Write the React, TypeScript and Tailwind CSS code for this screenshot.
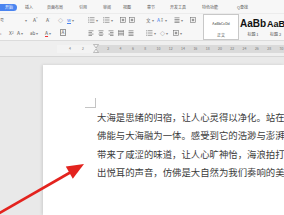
import React from "react";

const gray = "text-[#666]";

function Tab({ w, label, active }: { w: number; label: string; active?: boolean }) {
  return (
    <div style={{ width: w }} className="flex items-center shrink-0">
      {active ? (
        <div className="h-[7px] w-[17px] rounded-r-full bg-[#4a84f0] text-white text-[4px] leading-[7px] pl-[5px]">{label}</div>
      ) : (
        <span className="text-[4px] leading-[5px] text-[#555]">{label}</span>
      )}
    </div>
  );
}

function Cell({ w, children }: { w: number; children?: React.ReactNode }) {
  return (
    <div style={{ width: w }} className={`flex items-center shrink-0 h-full text-[5px] leading-[6px] ${gray}`}>
      {children}
    </div>
  );
}

function Lines({ kind }: { kind: "l" | "c" | "r" | "j" | "d" | "b" }) {
  const rows = [0, 1.6, 3.2, 4.8];
  const w = (i: number) => {
    if (kind === "l" || kind === "c" || kind === "r") return [5, 3.5, 5, 3.5][i];
    return 5;
  };
  const x = (i: number) => {
    if (kind === "c") return (5 - w(i)) / 2;
    if (kind === "r") return 5 - w(i);
    return 0;
  };
  return (
    <svg width="6" height="6" viewBox="0 0 6 6">
      {kind === "b" && <rect x="0" y="0" width="6" height="6" fill="#8a8a8a" />}
      {rows.map((r, i) => (
        <rect key={i} x={0.5 + x(i)} y={0.5 + r} width={w(i)} height="0.7" fill={kind === "b" ? "#fff" : "#777"} />
      ))}
    </svg>
  );
}

function ListIcon() {
  return (
    <svg width="7" height="6" viewBox="0 0 7 6">
      {[0.8, 3, 5.2].map((y) => (
        <g key={y}>
          <rect x="0.3" y={y - 0.5} width="1" height="1" fill="#777" />
          <rect x="2" y={y - 0.35} width="4.5" height="0.7" fill="#777" />
        </g>
      ))}
    </svg>
  );
}

function BoxIcon() {
  return (
    <svg width="6" height="6" viewBox="0 0 6 6">
      <rect x="0.5" y="0.5" width="5" height="5" fill="none" stroke="#777" strokeWidth="0.6" />
      <rect x="1.8" y="1.8" width="2.4" height="2.4" fill="#999" />
    </svg>
  );
}

const Dot = () => <span className="text-[4px] ml-[1px] text-[#888]">▾</span>;

export default function App() {
  const rulerLeft = [
    { x: 70, t: "4" },
    { x: 83, t: "2" },
  ];
  const rulerRight: { x: number; t: string }[] = [];
  for (let i = 1; i <= 15; i++) {
    rulerRight.push({ x: 96 + i * 12.3, t: String(i * 2) });
  }
  return (
    <div className="relative w-[284px] h-[215px] overflow-hidden bg-[#e9e9e9] flex flex-col" style={{ fontFamily: '"Noto Sans CJK SC", "Noto Sans", sans-serif' }}>
      {/* Toolbar */}
      <div className="h-[41px] bg-[#f7f7f7] border-b border-[#dcdcdc] shrink-0 flex flex-col">
        <div className="h-[15px] flex items-center pt-[2px] border-b border-[#ececec]">
          <Tab w={25} label="开始" active />
          <Tab w={22} label="插入" />
          <Tab w={32} label="页面布局" />
          <Tab w={24} label="引用" />
          <Tab w={20} label="审阅" />
          <Tab w={24} label="视图" />
          <Tab w={23} label="章节" />
          <Tab w={32} label="开发工具" />
          <Tab w={35} label="特色功能" />
          <Tab w={30} label="Q查找" />
        </div>
        <div className="flex flex-1">
          <div className="w-[203px] flex flex-col">
            <div className="h-[13px] flex items-end pb-[2px]">
              <Cell w={33}>
                <div className="h-[6px] w-[28px] flex items-center justify-between pr-[1px] text-[4px] text-[#555]">
                  <span>号</span>
                  <Dot />
                </div>
              </Cell>
              <Cell w={13}>A<sup className="text-[3px]">+</sup></Cell>
              <Cell w={12}>A<sup className="text-[3px]">-</sup></Cell>
              <Cell w={9}>◇</Cell>
              <Cell w={21}>
                <span className="text-[#4a84f0] underline decoration-[#4a84f0]">w</span>
                <Dot />
              </Cell>
              <Cell w={15}><ListIcon /><Dot /></Cell>
              <Cell w={17}><ListIcon /><Dot /></Cell>
              <Cell w={9}><BoxIcon /></Cell>
              <Cell w={17}><BoxIcon /></Cell>
              <Cell w={11}><span className="text-[4.5px]">文</span><Dot /></Cell>
              <Cell w={17}><span className="text-[#4a84f0]">A</span><span className="text-[4px]">↕</span><Dot /></Cell>
              <Cell w={16}><Lines kind="j" /><Dot /></Cell>
              <Cell w={13}><BoxIcon /></Cell>
            </div>
            <div className="h-[11px] flex items-center">
              <Cell w={9}>‹</Cell>
              <Cell w={8}>X<sub className="text-[3px]">2</sub></Cell>
              <Cell w={13}>A<Dot /></Cell>
              <Cell w={15}><span className="text-[4.5px]">ab</span><Dot /></Cell>
              <Cell w={15}><span className="underline decoration-[#e33]">A</span><Dot /></Cell>
              <Cell w={28}><span className="border border-[#999] px-[0.5px] leading-[5px] text-[4.5px]">A</span></Cell>
              <Cell w={10}><Lines kind="l" /></Cell>
              <Cell w={10}><Lines kind="c" /></Cell>
              <Cell w={10}><Lines kind="r" /></Cell>
              <Cell w={10}><Lines kind="b" /></Cell>
              <Cell w={18}><Lines kind="d" /></Cell>
              <Cell w={14}><ListIcon /><Dot /></Cell>
              <Cell w={13}>◇<Dot /></Cell>
              <Cell w={30}><BoxIcon /><Dot /></Cell>
            </div>
          </div>
          {/* Styles gallery */}
          <div className="flex">
            <div className="w-[36px] h-[26px] border border-[#c8c8c8] bg-white flex flex-col items-center justify-between pt-[7px] pb-[1px]">
              <span className="text-[3.6px] leading-[4px] text-[#333]">AaBbCcDd</span>
              <span className="text-[4px] leading-[5px] text-[#555]">正文</span>
            </div>
            <div className="w-[26px] flex flex-col items-center pt-[4px] ml-[1px]">
              <span className="text-[10px] leading-[12px] font-bold text-[#111]" style={{ fontFamily: '"Liberation Sans", sans-serif' }}>AaBb</span>
              <span className="text-[4px] leading-[5px] text-[#555] mt-[2px]">标题 1</span>
            </div>
            <div className="w-[20px] overflow-hidden flex flex-col items-start pt-[5px] ml-[1px]">
              <span className="text-[9px] leading-[11px] font-bold text-[#111] whitespace-nowrap" style={{ fontFamily: '"Liberation Sans", sans-serif' }}>AaBb</span>
              <span className="text-[4px] leading-[5px] text-[#555] mt-[2px] ml-[3px] whitespace-nowrap">标题 2</span>
            </div>
          </div>
        </div>
      </div>

      {/* Ruler */}
      <div className="h-[16px] shrink-0 border-b border-[#d6d6d6] bg-[#efefef] flex items-center">
        <div className="relative ml-[57px] h-[8px] flex-1 flex">
          <div className="w-[39px] h-full bg-[#f3f3f3]" />
          <div className="flex-1 h-full bg-[#dadada]" />
          {rulerLeft.concat(rulerRight).map((n) => (
            <span key={n.t + n.x} className="absolute top-0 text-[3.5px] leading-[8px] text-[#777]" style={{ left: n.x - 57 - 1 }}>
              {n.t}
            </span>
          ))}
          <svg className="absolute top-[-1px]" style={{ left: 96 - 57 - 3 }} width="6" height="10" viewBox="0 0 6 10">
            <path d="M0.5 0.5 H5.5 L3 4 Z M3 5 L5.5 8.5 H0.5 Z" fill="#f4f4f4" stroke="#888" strokeWidth="0.5" />
          </svg>
        </div>
      </div>

      {/* Canvas */}
      <div className="flex-1 pt-[8px] pl-[43px]">
        <div className="bg-white h-full shadow-[-1px_0_3px_rgba(0,0,0,0.12)] pt-[33px]">
          <div className="ml-[42px] w-[11px] h-[10px] border-r border-b border-[#c4c4c4]" />
          <div className="ml-[54px] text-[9.4px] leading-[18.5px] text-[#3c3c3c] whitespace-nowrap -mt-[0.5px]">
            <div>大海是思绪的归宿，让人心灵得以净化。站在</div>
            <div>佛能与大海融为一体。感受到它的浩渺与澎湃</div>
            <div>带来了咸涩的味道，让人心旷神怡，海浪拍打</div>
            <div>出悦耳的声音，仿佛是大自然为我们奏响的美</div>
          </div>
        </div>
      </div>

      {/* Red annotation arrow */}
      <svg className="absolute left-0 top-0 pointer-events-none" width="284" height="215" viewBox="0 0 284 215">
        <line x1="-2" y1="214" x2="71" y2="172" stroke="#e3231e" strokeWidth="2.6" />
        <polygon points="84,164 65.8,166.5 72.8,178.7" fill="#e3231e" />
      </svg>
    </div>
  );
}
